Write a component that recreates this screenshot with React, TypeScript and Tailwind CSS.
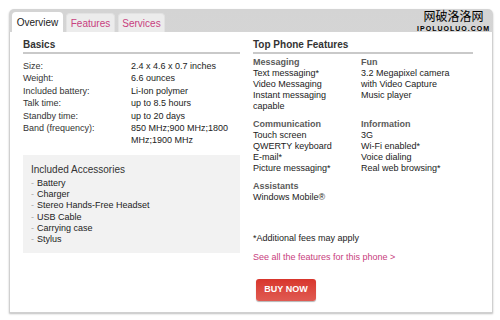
import React from 'react';

const basics = [
  ['Size:', '2.4 x 4.6 x 0.7 inches'],
  ['Weight:', '6.6 ounces'],
  ['Included battery:', 'Li-Ion polymer'],
  ['Talk time:', 'up to 8.5 hours'],
  ['Standby time:', 'up to 20 days'],
  ['Band (frequency):', '850 MHz;900 MHz;1800 MHz;1900 MHz'],
];

const accessories = ['Battery', 'Charger', 'Stereo Hands-Free Headset', 'USB Cable', 'Carrying case', 'Stylus'];

function Group({ title, items }: { title: string; items: string[] }) {
  return (
    <div className="leading-[11px]">
      <div className="font-bold text-[#5a5a5a]">{title}</div>
      {items.map(i => (
        <div key={i}>{i}</div>
      ))}
    </div>
  );
}

export default function App() {
  return (
    <div
      className="relative w-[500px] h-[320px] bg-white pt-[9px] pl-[9px] pr-[7px] text-[#222]"
      style={{ fontFamily: '"Liberation Sans", Arial, sans-serif' }}
    >
      {/* watermark */}
      <div className="absolute right-[10px] top-[8px] flex flex-col items-center">
        <span className="text-[12px] leading-[15px] text-black" style={{ fontFamily: '"Noto Sans CJK SC", sans-serif' }}>网破洛洛网</span>
        <span className="mt-[2px] text-[7px] font-bold leading-[8px] tracking-[1px] text-black">IPOLUOLUO.COM</span>
      </div>

      <div className="rounded-t-[5px] bg-gradient-to-b from-[#d4d4d4] to-[#dedede] shadow-[0_1px_2px_rgba(0,0,0,0.25)]">
        {/* tabs */}
        <div className="flex h-[23px] items-end gap-[3px] pl-[3px]">
          <div className="flex h-[20px] w-[51px] items-center justify-center rounded-t-[4px] bg-white text-[10px] text-[#222]">
            Overview
          </div>
          <div className="flex h-[19px] w-[49px] items-center justify-center rounded-t-[4px] bg-[#ececec] border border-b-0 border-[#e2e2e2] text-[10px] text-[#c8407e]">
            Features
          </div>
          <div className="flex h-[19px] w-[47px] items-center justify-center rounded-t-[4px] bg-[#ececec] border border-b-0 border-[#e2e2e2] text-[10px] text-[#c8407e]">
            Services
          </div>
        </div>

        {/* content */}
        <div className="flex h-[281px] gap-[13px] border border-t-0 border-[#d0d0d0] bg-white pl-[13px] pt-[7px] text-[9px]">
          {/* left column */}
          <div className="w-[217px]">
            <div className="border-b-2 border-[#c9c9c9] pb-[1px] text-[10px] font-bold leading-[12px] text-[#333]">Basics</div>
            <div className="mt-[6px] leading-[12.4px]">
              {basics.map(([k, v]) => (
                <div key={k} className="flex">
                  <div className="w-[108px] text-[#333]">{k}</div>
                  <div className="w-[104px]">{v}</div>
                </div>
              ))}
            </div>
            <div className="mt-[8px] h-[98px] bg-[#f2f2f2] pl-[8px] pt-[8px]">
              <div className="text-[10px] leading-[13px] text-[#333]">Included Accessories</div>
              <ul className="mt-[2px] leading-[11.3px]">
                {accessories.map(a => (
                  <li key={a} className="flex">
                    <span className="w-[6px] text-[#aaa]">-</span>
                    {a}
                  </li>
                ))}
              </ul>
            </div>
          </div>

          {/* right column */}
          <div className="w-[220px]">
            <div className="border-b-2 border-[#c9c9c9] pb-[1px] text-[10px] font-bold leading-[12px] text-[#333]">Top Phone Features</div>
            <div className="mt-[3px] grid grid-cols-[108px_1fr] gap-y-[7px]">
              <Group title="Messaging" items={['Text messaging*', 'Video Messaging', 'Instant messaging', 'capable']} />
              <Group title="Fun" items={['3.2 Megapixel camera', 'with Video Capture', 'Music player']} />
              <Group title="Communication" items={['Touch screen', 'QWERTY keyboard', 'E-mail*', 'Picture messaging*']} />
              <Group title="Information" items={['3G', 'Wi-Fi enabled*', 'Voice dialing', 'Real web browsing*']} />
              <Group title="Assistants" items={['Windows Mobile®']} />
            </div>
            <div className="mt-[30px] leading-[11px]">*Additional fees may apply</div>
            <div className="mt-[8px] leading-[11px] text-[#c8407e]">See all the features for this phone &gt;</div>
            <button className="mt-[16px] ml-[3px] flex h-[22px] w-[60px] items-center justify-center rounded-[3px] bg-gradient-to-b from-[#d8352c] to-[#e05a52] text-[9px] font-bold text-white shadow-[0_1px_1px_rgba(0,0,0,0.3)]">
              BUY NOW
            </button>
          </div>
        </div>
      </div>
    </div>
  );
}
